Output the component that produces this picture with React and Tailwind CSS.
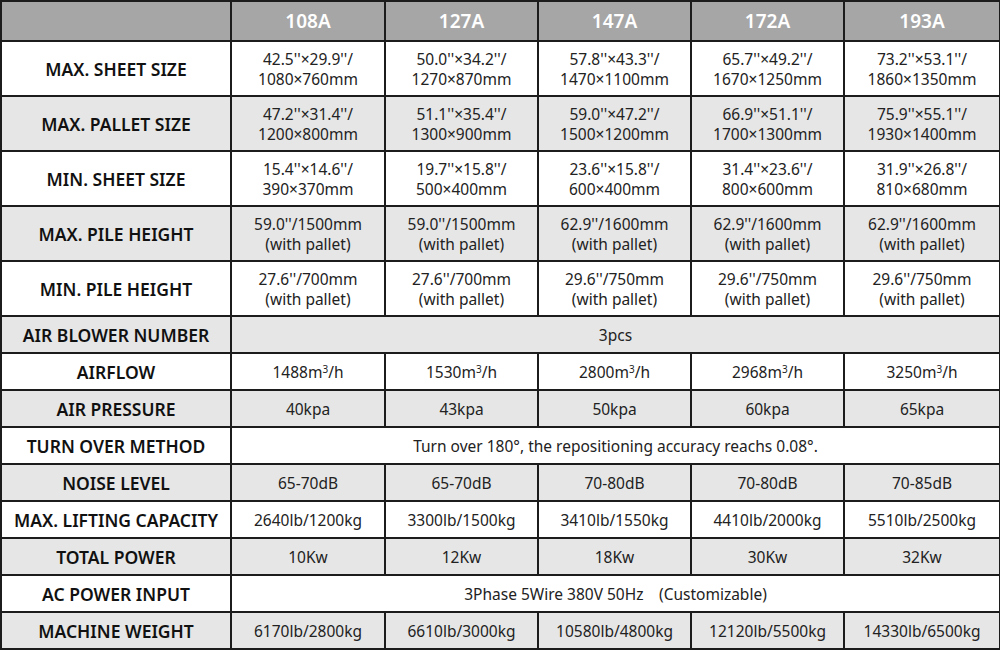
import React from 'react';

const models = ['108A', '127A', '147A', '172A', '193A'];

// each row: label, tall?, values (array of 5) or a single spanning string
const rows = [
  {
    label: 'MAX. SHEET SIZE',
    tall: true,
    values: [
      ["42.5''×29.9''/", '1080×760mm'],
      ["50.0''×34.2''/", '1270×870mm'],
      ["57.8''×43.3''/", '1470×1100mm'],
      ["65.7''×49.2''/", '1670×1250mm'],
      ["73.2''×53.1''/", '1860×1350mm'],
    ],
  },
  {
    label: 'MAX. PALLET SIZE',
    tall: true,
    values: [
      ["47.2''×31.4''/", '1200×800mm'],
      ["51.1''×35.4''/", '1300×900mm'],
      ["59.0''×47.2''/", '1500×1200mm'],
      ["66.9''×51.1''/", '1700×1300mm'],
      ["75.9''×55.1''/", '1930×1400mm'],
    ],
  },
  {
    label: 'MIN. SHEET SIZE',
    tall: true,
    values: [
      ["15.4''×14.6''/", '390×370mm'],
      ["19.7''×15.8''/", '500×400mm'],
      ["23.6''×15.8''/", '600×400mm'],
      ["31.4''×23.6''/", '800×600mm'],
      ["31.9''×26.8''/", '810×680mm'],
    ],
  },
  {
    label: 'MAX. PILE HEIGHT',
    tall: true,
    values: [
      ["59.0''/1500mm", '(with pallet)'],
      ["59.0''/1500mm", '(with pallet)'],
      ["62.9''/1600mm", '(with pallet)'],
      ["62.9''/1600mm", '(with pallet)'],
      ["62.9''/1600mm", '(with pallet)'],
    ],
  },
  {
    label: 'MIN. PILE HEIGHT',
    tall: true,
    values: [
      ["27.6''/700mm", '(with pallet)'],
      ["27.6''/700mm", '(with pallet)'],
      ["29.6''/750mm", '(with pallet)'],
      ["29.6''/750mm", '(with pallet)'],
      ["29.6''/750mm", '(with pallet)'],
    ],
  },
  { label: 'AIR BLOWER NUMBER', span: '3pcs' },
  { label: 'AIRFLOW', airflow: ['1488', '1530', '2800', '2968', '3250'] },
  { label: 'AIR PRESSURE', values: ['40kpa', '43kpa', '50kpa', '60kpa', '65kpa'] },
  { label: 'TURN OVER METHOD', span: 'Turn over 180°, the repositioning accuracy reachs 0.08°.' },
  { label: 'NOISE LEVEL', values: ['65-70dB', '65-70dB', '70-80dB', '70-80dB', '70-85dB'] },
  {
    label: 'MAX. LIFTING CAPACITY',
    values: ['2640lb/1200kg', '3300lb/1500kg', '3410lb/1550kg', '4410lb/2000kg', '5510lb/2500kg'],
  },
  { label: 'TOTAL POWER', values: ['10Kw', '12Kw', '18Kw', '30Kw', '32Kw'] },
  { label: 'AC POWER INPUT', span: '3Phase 5Wire 380V 50Hz\u2003(Customizable)' },
  {
    label: 'MACHINE WEIGHT',
    values: ['6170lb/2800kg', '6610lb/3000kg', '10580lb/4800kg', '12120lb/5500kg', '14330lb/6500kg'],
  },
];

const cell = 'border-2 border-[#1c1c1c] text-center align-middle p-0';

const Value = ({ v }) =>
  Array.isArray(v) ? (
    <>
      <div>{v[0]}</div>
      <div>{v[1]}</div>
    </>
  ) : (
    v
  );

const App = () => {
  return (
    <div
      className="w-[1000px] h-[652px] bg-white overflow-hidden"
      style={{ fontFamily: '"Noto Sans", "Open Sans", sans-serif' }}
    >
      <table className="border-collapse table-fixed w-[999px] text-[15.5px] leading-[20px] text-[#222]">
        <colgroup>
          <col className="w-[230px]" />
          <col className="w-[154px]" />
          <col className="w-[153px]" />
          <col className="w-[153px]" />
          <col className="w-[153px]" />
          <col className="w-[156px]" />
        </colgroup>
        <thead>
          <tr className="h-[40px] bg-[#a6a6a6]">
            <th className={cell}></th>
            {models.map((m) => (
              <th key={m} className={`${cell} text-white font-semibold text-[19px]`}>
                {m}
              </th>
            ))}
          </tr>
        </thead>
        <tbody>
          {rows.map((r, i) => (
            <tr
              key={r.label}
              className={`${r.tall ? 'h-[55px]' : 'h-[37px]'} ${i % 2 === 1 ? 'bg-[#e6e6e6]' : 'bg-white'}`}
            >
              <td className={`${cell} font-semibold text-[17.5px] text-[#111]`}>{r.label}</td>
              {r.span && (
                <td colSpan={5} className={cell}>
                  {r.span}
                </td>
              )}
              {r.values &&
                r.values.map((v, j) => (
                  <td key={j} className={cell}>
                    <Value v={v} />
                  </td>
                ))}
              {r.airflow &&
                r.airflow.map((v, j) => (
                  <td key={j} className={cell}>
                    {v}m<sup className="text-[10px]">3</sup>/h
                  </td>
                ))}
            </tr>
          ))}
        </tbody>
      </table>
    </div>
  );
};

export default App;
